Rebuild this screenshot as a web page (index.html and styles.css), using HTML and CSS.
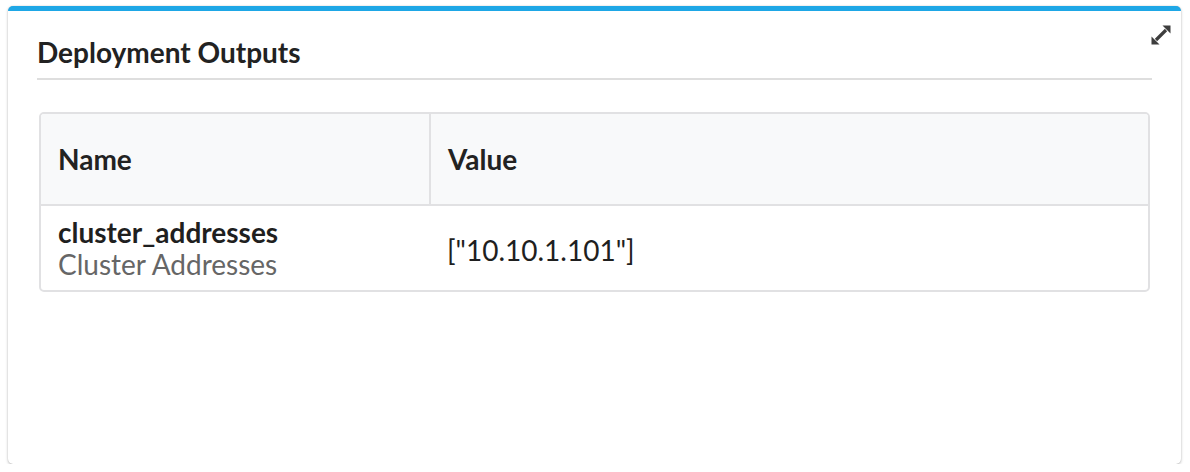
FILE: index.html
```html
<!DOCTYPE html>
<html>
<head>
<meta charset="utf-8">
<link rel="stylesheet" href="styles.css">
</head>
<body>
<div class="card">
  <div class="card-head">
    <h2 class="card-title">Deployment Outputs</h2>
    <button class="expand" aria-label="Expand">
      <svg width="22" height="22" viewBox="0 0 22 22">
        <path d="M20.5 1.5v8l-8-8z" fill="#3d3d3d"/>
        <path d="M1.5 20.5v-8l8 8z" fill="#3d3d3d"/>
        <path d="M16 6L6 16" stroke="#3d3d3d" stroke-width="3.2"/>
      </svg>
    </button>
  </div>
  <div class="table-wrap">
    <table class="outputs">
      <thead>
        <tr><th class="col-name">Name</th><th>Value</th></tr>
      </thead>
      <tbody>
        <tr>
          <td class="col-name"><div class="out-key">cluster_addresses</div><div class="out-desc">Cluster Addresses</div></td>
          <td class="out-val">["10.10.1.101"]</td>
        </tr>
      </tbody>
    </table>
  </div>
</div>
</body>
</html>
```

FILE: styles.css
```css
html, body { margin: 0; padding: 0; background: #fff; }
body {
  font-family: Lato, "Open Sans", sans-serif;
  color: #1f1f1f;
  padding: 6px 9px 0 8px;
}
.card {
  height: 458px;
  box-sizing: border-box;
  border-top: 5px solid #1ea7e6;
  border-radius: 5px;
  background: #fff;
  box-shadow: 0 1px 3px rgba(0,0,0,0.25), 0 0 1px rgba(0,0,0,0.2);
  padding: 0 29px;
}
.card-head {
  border-bottom: 2px solid #dedede;
  position: relative;
}
.card-title {
  margin: 0;
  font-size: 28px;
  font-weight: 700;
  line-height: 34px;
  padding: 24px 0 9px 0;
  color: #222;
}
.expand {
  position: absolute;
  right: -20px;
  top: 13px;
  background: none;
  border: 0;
  padding: 0;
  line-height: 0;
}
.table-wrap {
  margin: 32px 2px 0 2px;
  border: 2px solid #e1e1e3;
  border-radius: 5px;
  overflow: hidden;
}
.outputs {
  width: 100%;
  border-collapse: collapse;
  font-size: 28px;
}
.outputs th {
  background: #f8f9fa;
  text-align: left;
  font-weight: 700;
  height: 90px;
  padding: 0 17px;
  border-bottom: 2px solid #e1e1e3;
  color: #222;
}
.outputs th.col-name { border-right: 2px solid #e1e1e3; width: 354px; }
.outputs td {
  padding: 10px 17px 10px;
  vertical-align: middle;
}
.out-key { font-weight: 700; line-height: 32px; color: #1f1f1f; }
.out-desc { color: #666; line-height: 32px; }
.out-val { color: #1f1f1f; padding-top: 14px !important; }
```
